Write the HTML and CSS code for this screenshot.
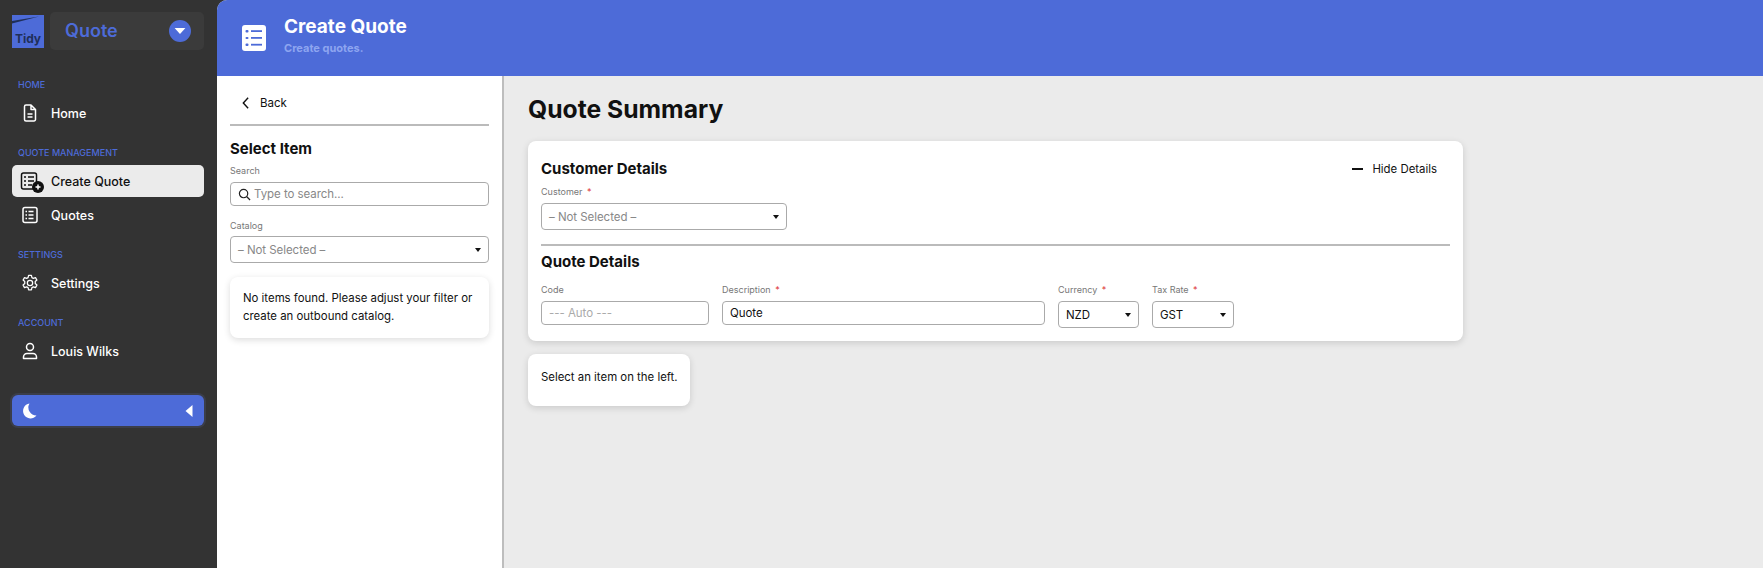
FILE: index.html
```html
<!DOCTYPE html>
<html lang="en">
<head>
<meta charset="utf-8">
<title>Create Quote</title>
<link rel="stylesheet" href="styles.css">
</head>
<body>
<div class="app">
  <aside class="sidebar">
    <div class="brand">
      <svg class="logo" viewBox="0 0 32 33" aria-hidden="true">
        <rect width="32" height="33" fill="#4d6bd8"/>
        <path d="M0 6L27 1.500L0 8.500Z" fill="#1f2f5a"/>
        <text x="16" y="28" text-anchor="middle" class="logo-text">Tidy</text>
      </svg>
      <div class="switcher">
        <span class="switcher-name">Quote</span>
        <span class="switcher-btn"><svg viewBox="0 0 10 6" width="12" height="8" aria-hidden="true"><path d="M0.500 0.500H9.500L5 5.500Z" fill="#fff"/></svg></span>
      </div>
    </div>

    <div class="nav-label">HOME</div>
    <a class="nav-item">
      <svg class="nav-icon" viewBox="0 0 20 20" aria-hidden="true"><path d="M4.500 3.500a1.500 1.500 0 0 1 1.500-1.500h5l4.500 4.500v10a1.500 1.500 0 0 1-1.500 1.500H6a1.500 1.500 0 0 1-1.500-1.500zM11 2v4.500h4.500M7.500 11h5M7.500 14h5"/></svg>
      <span>Home</span>
    </a>

    <div class="nav-label gap">QUOTE MANAGEMENT</div>
    <a class="nav-item active">
      <span class="icon-wrap">
        <svg class="nav-icon wide" viewBox="0 0 20 20" aria-hidden="true"><rect x="1.500" y="2" width="15" height="16" rx="2"/><path d="M8 6h6M8 10h6M8 14h4M4 6h2M4 10h2M4 14h2"/></svg>
        <span class="plus-badge"><svg viewBox="0 0 12 12" width="12" height="12" aria-hidden="true"><circle cx="6" cy="6" r="6" fill="#111"/><path d="M3.500 6h5M6 3.500v5" stroke="#fff" stroke-width="1.500"/></svg></span>
      </span>
      <span>Create Quote</span>
    </a>
    <a class="nav-item second">
      <svg class="nav-icon" viewBox="0 0 20 20" aria-hidden="true"><rect x="3" y="2.500" width="14" height="15" rx="2"/><path d="M8.500 6.500h5M8.500 10h5M8.500 13.500h5M5.500 6.500h1.500M5.500 10h1.500M5.500 13.500h1.500"/></svg>
      <span>Quotes</span>
    </a>

    <div class="nav-label gap">SETTINGS</div>
    <a class="nav-item">
      <svg class="nav-icon" viewBox="0 0 24 24" aria-hidden="true"><path d="M10.300 2.800h3.400l.6 2.700 1.700.9 2.600-.9 1.700 3-2 1.800v2.400l2 1.800-1.700 3-2.600-.9-1.700.9-.6 2.700h-3.400l-.6-2.700-1.700-.9-2.600.9-1.700-3 2-1.800v-2.400l-2-1.800 1.700-3 2.600.9 1.700-.9z"/><circle cx="12" cy="12" r="3.200"/></svg>
      <span>Settings</span>
    </a>

    <div class="nav-label gap">ACCOUNT</div>
    <a class="nav-item">
      <svg class="nav-icon" viewBox="0 0 20 20" aria-hidden="true"><circle cx="10" cy="6" r="3.500"/><path d="M3.500 17.500v-1.500a3.500 3.500 0 0 1 3.500-3.500h6a3.500 3.500 0 0 1 3.500 3.500v1.500z"/></svg>
      <span>Louis Wilks</span>
    </a>

    <div class="mode-bar">
      <svg viewBox="0 0 16 16" width="16" height="16" aria-hidden="true"><path d="M8.500 .5A7.500 7.500 0 1 0 15.500 12.500 8 8 0 0 1 8.500 .5Z" fill="#fff"/></svg>
      <svg viewBox="0 0 8 12" width="8" height="12" aria-hidden="true"><path d="M7.500 0V12L0.500 6Z" fill="#fff"/></svg>
    </div>
  </aside>

  <div class="content">
    <header class="topbar">
      <span class="topbar-icon">
        <svg viewBox="0 0 24 26" width="24" height="26" aria-hidden="true"><rect width="24" height="26" rx="3" fill="#fff"/><g fill="#4d6bd8"><rect x="3.500" y="5" width="3" height="2.500" rx="1"/><rect x="3.500" y="12" width="3" height="2" rx="1"/><rect x="3.500" y="18.500" width="3" height="2.500" rx="1"/><rect x="9" y="5.200" width="11" height="1.800"/><rect x="9" y="12" width="11" height="1.800"/><rect x="9" y="18.800" width="11" height="1.800"/></g></svg>
      </span>
      <div class="topbar-text">
        <h1>Create Quote</h1>
        <p>Create quotes.</p>
      </div>
    </header>

    <div class="body">
      <section class="panel">
        <div class="back">
          <svg viewBox="0 0 10 16" width="9" height="14" aria-hidden="true"><path d="M8 2L2.500 8L8 14" fill="none" stroke="#111" stroke-width="1.600"/></svg>
          <span>Back</span>
        </div>
        <h2 class="panel-title">Select Item</h2>
        <label class="field-label">Search</label>
        <div class="search">
          <svg viewBox="0 0 14 14" width="13" height="13" aria-hidden="true"><circle cx="6" cy="6" r="4.500" fill="none" stroke="#222" stroke-width="1.300"/><path d="M9.500 9.500L13 13" stroke="#222" stroke-width="1.400"/></svg>
          <span class="placeholder">Type to search...</span>
        </div>
        <label class="field-label catalog-label">Catalog</label>
        <div class="select">
          <span class="placeholder">– Not Selected –</span>
          <i class="caret"></i>
        </div>
        <div class="card notice">No items found. Please adjust your filter or create an outbound catalog.</div>
      </section>

      <main class="main">
        <h2 class="main-title">Quote Summary</h2>
        <div class="card summary">
          <div class="summary-head">
            <h3>Customer Details</h3>
            <span class="toggle"><i class="dash"></i>Hide Details</span>
          </div>
          <label class="field-label">Customer <b class="req">*</b></label>
          <div class="select customer">
            <span class="placeholder">– Not Selected –</span>
            <i class="caret"></i>
          </div>
          <hr class="rule">
          <h3>Quote Details</h3>
          <div class="fields">
            <div class="field code">
              <label class="field-label">Code</label>
              <div class="input"><span class="placeholder pale">--- Auto ---</span></div>
            </div>
            <div class="field desc">
              <label class="field-label">Description <b class="req">*</b></label>
              <div class="input"><span>Quote</span></div>
            </div>
            <div class="field currency">
              <label class="field-label">Currency <b class="req">*</b></label>
              <div class="select"><span>NZD</span><i class="caret"></i></div>
            </div>
            <div class="field tax">
              <label class="field-label">Tax Rate <b class="req">*</b></label>
              <div class="select"><span>GST</span><i class="caret"></i></div>
            </div>
          </div>
        </div>
        <div class="card hint">Select an item on the left.</div>
      </main>
    </div>
  </div>
</div>
</body>
</html>
```
FILE: styles.css
```css
* { box-sizing: border-box; }
html, body { margin: 0; height: 100%; overflow: hidden; }
body { font-family: "Inter", "Liberation Sans", sans-serif; color: #111; background: #333; }
h1, h2, h3, p { margin: 0; }

.app { display: flex; height: 568px; }

.sidebar { width: 217px; flex: none; background: #333; padding: 12px 13px 0 12px; display: flex; flex-direction: column; }
.brand { display: flex; align-items: center; gap: 6px; height: 38px; margin-bottom: 29px; }
.logo { width: 32px; height: 33px; flex: none; }
.logo-text { font: 700 12px "Inter", sans-serif; fill: #1f2f5a; }
.switcher { flex: 1; height: 38px; background: #3b3b3b; border-radius: 5px; display: flex; align-items: center; justify-content: space-between; padding: 0 13px 0 15px; }
.switcher-name { color: #4d6bd8; font-size: 18px; font-weight: 600; margin-top: -2px; }
.switcher-btn { width: 22px; height: 22px; border-radius: 50%; background: #4d6bd8; display: flex; align-items: center; justify-content: center; }

.nav-label { font-size: 9px; line-height: 12px; font-weight: 500; color: #4d6bd8; padding-left: 6px; margin-bottom: 6px; }
.nav-label.gap { margin-top: 18px; }
.nav-item { height: 32px; display: flex; align-items: center; gap: 11px; padding-left: 8px; color: #fff; font-size: 12.500px; font-weight: 500; border-radius: 5px; }
.nav-item.second { margin-top: 2px; }
.nav-item.active { background: #ebebeb; color: #111; }
.nav-icon { width: 20px; height: 20px; flex: none; fill: none; stroke: #fff; stroke-width: 1.500; stroke-linejoin: round; }
.active .nav-icon { stroke: #111; }
.icon-wrap { position: relative; display: flex; width: 20px; height: 20px; }
.plus-badge { position: absolute; right: -4px; bottom: -2px; display: flex; }

.mode-bar { margin-top: 28px; height: 31px; background: #4d6bd8; border-radius: 6px; display: flex; align-items: center; justify-content: space-between; padding: 0 11px 0 9px; box-shadow: 0 0 0 2px #3b3e4a; }

.content { flex: 1; min-width: 0; display: flex; flex-direction: column; background: #ebebeb; border-radius: 10px 0 0 0; overflow: hidden; }
.topbar { height: 76px; flex: none; background: #4d6bd8; display: flex; align-items: center; gap: 18px; padding: 0 0 0 25px; }
.topbar-icon { display: flex; }
.topbar-text { margin-top: -7px; }
.topbar h1 { color: #fff; font-size: 19px; line-height: 24px; font-weight: 700; }
.topbar p { color: #8ea5f0; font-size: 11px; line-height: 14px; font-weight: 700; margin-top: 2px; }

.body { flex: 1; display: flex; min-height: 0; }
.panel { width: 287px; flex: none; background: #fff; border-right: 2px solid #bdbdbd; padding: 0 13px; }
.back { height: 50px; border-bottom: 2px solid #bbb; display: flex; align-items: center; gap: 10px; padding: 5px 0 0 11px; font-size: 11.500px; }
.panel-title { font-size: 15px; line-height: 20px; font-weight: 700; margin-top: 13px; }

.field-label { display: block; font-size: 9px; line-height: 12px; color: #777; }
.panel-title + .field-label { margin-top: 6px; }
.req { color: #d33; font-weight: 400; margin-left: 2px; }
.placeholder { color: #888; }
.placeholder.pale { color: #aaa; }

.search, .select, .input { border: 1px solid #aaa; border-radius: 4px; background: #fff; display: flex; align-items: center; font-size: 11.500px; letter-spacing: -.05px; }
.search { height: 24px; margin-top: 5px; gap: 3px; padding-left: 7px; }
.catalog-label { margin-top: 14px; }
.select { height: 27px; margin-top: 4px; justify-content: space-between; padding: 0 7px; }
.input { height: 24px; margin-top: 5px; padding: 0 7px; }
.caret { width: 0; height: 0; border-left: 3px solid transparent; border-right: 3px solid transparent; border-top: 4px solid #111; }

.card { background: #fff; border-radius: 8px; box-shadow: 0 2px 7px rgba(0,0,0,.14); font-size: 11.400px; }
.notice { margin-top: 14px; padding: 12px 13px; line-height: 18px; height: 61px; }

.main { flex: 1; padding: 0 24px; min-width: 0; }
.main-title { font-size: 24.700px; line-height: 32px; font-weight: 700; margin-top: 17px; }
.summary { width: 935px; margin-top: 16px; padding: 18px 13px 0; height: 200px; }
.summary h3 { font-size: 15px; line-height: 20px; font-weight: 700; }
.summary-head { display: flex; justify-content: space-between; align-items: center; padding-right: 13px; margin-bottom: 7px; }
.toggle { display: flex; align-items: center; gap: 9px; font-size: 11.400px; margin-top: -1px; }
.dash { width: 11px; height: 2px; background: #111; }
.select.customer { width: 246px; margin-top: 5px; }
.rule { border: 0; height: 2px; background: #bbb; margin: 14px 0 6px; }
.fields { display: flex; gap: 13px; margin-top: 12px; }
.field.code { width: 168px; }
.field.desc { width: 323px; }
.field.currency { width: 81px; }
.field.tax { width: 82px; }
.field .select { margin-top: 5px; }
.hint { width: 162px; height: 52px; margin-top: 13px; padding: 16px 13px; white-space: nowrap; }
```
